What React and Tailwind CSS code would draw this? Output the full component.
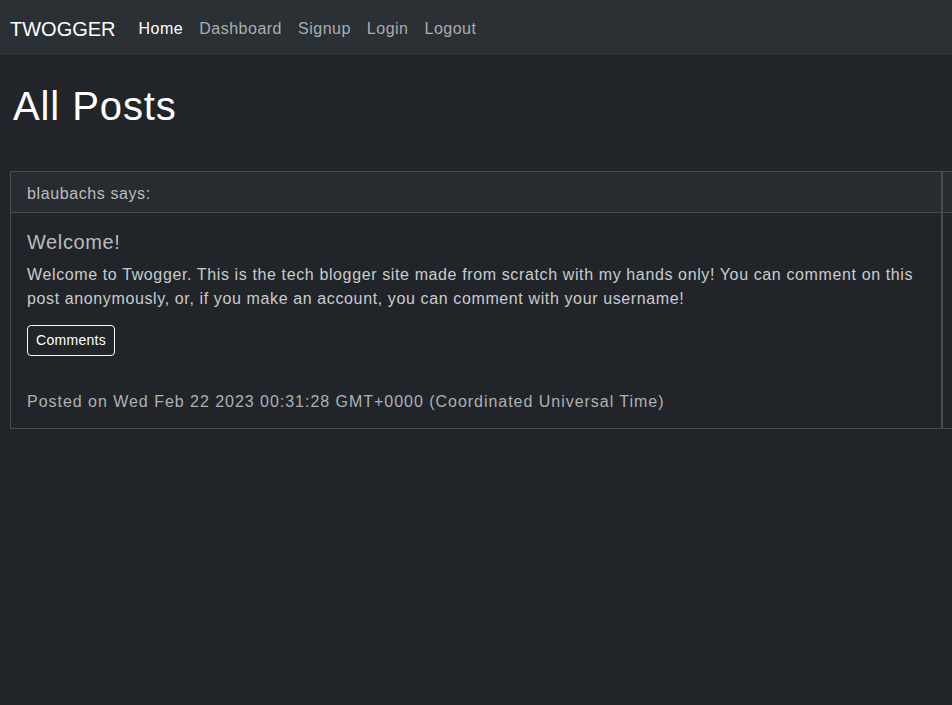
const navLinks = ['Home', 'Dashboard', 'Signup', 'Login', 'Logout'];

const Navbar = () => (
  <nav className="h-[55px] bg-[#2b3035] flex items-center px-[10px] pt-[2px]">
    <span className="text-[20px] text-white mr-[15px] leading-[30px]">TWOGGER</span>
    <ul className="flex">
      {navLinks.map((link, i) => (
        <li key={link}>
          <a
            href="#"
            className={`block px-[8px] py-[8px] text-[16px] leading-[24px] tracking-[0.5px] ${
              i === 0 ? 'text-white' : 'text-[#a9adb1]'
            }`}
          >
            {link}
          </a>
        </li>
      ))}
    </ul>
  </nav>
);

const PostCard = ({ author, title, body, date }) => (
  <div className="w-[960px] border border-[#494d52] flex">
    <div className="w-[932px] border-r-2 border-[#494d52] shrink-0">
      <div className="bg-[#282c30] border-b border-[#494d52] px-[16px] pt-[10px] pb-[6px] leading-[24px] text-[#b8bcc0] tracking-[0.6px]">
        {author} says:
      </div>
      <div className="px-[16px] pt-[17px] pb-[14px]">
        <h5 className="text-[20px] leading-[24px] mb-[9px] text-[#b8bcc0] tracking-[0.6px]">{title}</h5>
        <p className="leading-[24px] mb-[14px] text-[#c8ccd0] tracking-[0.62px]">{body}</p>
        <button className="border border-[#f8f9fa] rounded-[4px] px-[8px] h-[31px] text-[14px] text-white tracking-[0.3px]">
          Comments
        </button>
        <p className="mt-[34px] leading-[24px] text-[#adb1b5] tracking-[0.97px]">Posted on {date}</p>
      </div>
    </div>
    <div className="flex-1 flex flex-col">
      <div className="h-[41px] bg-[#282c30] border-b border-[#494d52]" />
    </div>
  </div>
);

export default function App() {
  return (
    <div
      className="min-h-[705px] bg-[#212529] text-[#dee2e6] overflow-hidden"
      style={{ fontFamily: '"Liberation Sans", Arial, sans-serif' }}
    >
      <Navbar />
      <main className="px-[10px]">
        <h1 className="text-[40px] leading-[48px] text-white pt-[27px] pl-[3px] mb-[41px] tracking-[0.9px]">All Posts</h1>
        <PostCard
          author="blaubachs"
          title="Welcome!"
          body="Welcome to Twogger. This is the tech blogger site made from scratch with my hands only! You can comment on this post anonymously, or, if you make an account, you can comment with your username!"
          date="Wed Feb 22 2023 00:31:28 GMT+0000 (Coordinated Universal Time)"
        />
      </main>
    </div>
  );
}
